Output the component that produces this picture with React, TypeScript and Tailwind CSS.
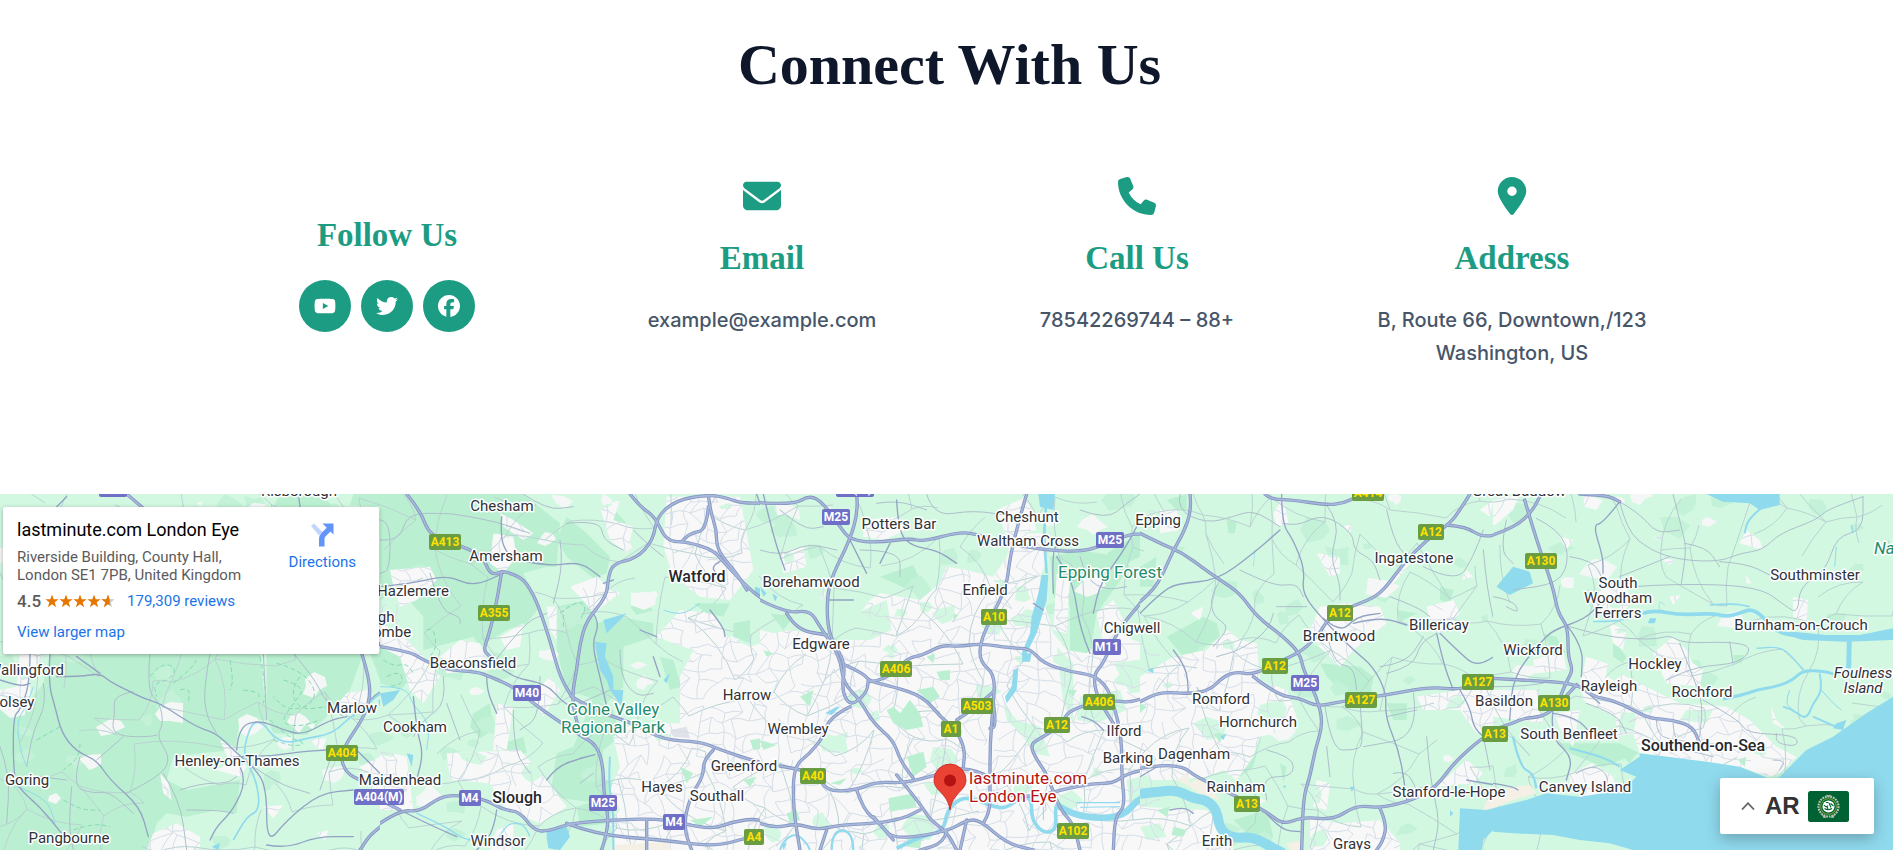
import { FaYoutube, FaTwitter, FaFacebook, FaEnvelope, FaPhone, FaLocationDot } from "react-icons/fa6";
import type { ReactNode } from "react";

type Tile = {
  x: number;
  width: number;
  light?: string[];
  woods: string[];
  urban: string[];
  parks?: string[];
  sand?: string[];
  water: string[];
  rivers: [string, number][];
  major: string[];
  medium: string[];
  thin: string[];
  paths?: string[];
};

/* Every tile is drawn in a grid of three units per map pixel. */
const tiles: Tile[] = [
  {
    x: 0,
    width: 380,
    woods: [
      "0,660 60,670 130,580 150,490 780,490 800,690 720,690 705,780 600,790 520,800 500,870 560,900 720,870 710,970 650,960 560,980 500,970 470,1000 450,1080 0,1080",
      "1060,12 1200,12 1200,300 1140,300 1140,50 1050,45",
      "800,490 1090,490 1050,600 980,680 920,735 820,730 800,680",
      "1110,490 1200,490 1200,560 1140,570",
      "840,12 960,12 1000,50 820,50",
    ],
    urban: [
      "60,490 130,490 90,570 90,660 0,660 0,600 50,590",
      "660,750 700,770 740,830 720,860 650,840 690,820",
      "1040,610 1100,600 1110,640 1030,680 980,680",
      "440,1080 460,1030 530,1000 600,1040 600,1080",
      "1080,830 1160,790 1200,800 1200,980 1140,950 1110,880",
      "480,850 505,880 515,930 490,910",
      "790,950 850,945 820,985",
      "920,705 945,700 940,720",
      "930,750 980,745 965,785",
      "950,1030 985,1020 975,1050",
      "1120,490 1140,300 1200,350 1200,460",
      "590,38 608,36 602,48",
    ],
    water: ["1135,630 1160,620 1155,640 1138,648", "1170,605 1190,600 1188,620 1172,625", "635,1070 660,1058 655,1080"],
    rivers: [
      ["1200,595 1140,605 1100,650 1050,680 1000,730 920,745 860,760 820,740 790,700 760,695 740,740 730,800 770,870 780,960 740,980 700,1050", 5],
      ["100,590 80,650 50,690 60,780 80,830", 3],
      ["50,890 140,920 165,1000", 3],
    ],
    major: [
      "1085,490 1110,570 1108,640 1080,700 1045,750 1020,800 1040,850 1080,870",
      "1200,970 1120,1020 1080,1080",
      "1135,460 1165,480 1200,480",
      "380,12 430,55",
    ],
    medium: [
      "170,560 240,560 300,550 330,575 380,600 430,625 480,640 540,680 600,715 650,730 710,790 760,830 800,890 800,1065 860,990 960,910 1060,900",
      "150,490 145,580 165,650 185,730 230,785 290,810 330,870 420,950 445,1040",
      "90,490 90,580 60,660 40,680 40,830 50,890 120,950 185,1030",
      "710,780 715,710 780,690 850,720 910,735 990,690 1040,680",
      "720,830 740,870 700,960 650,1010 630,1050",
      "700,800 800,800 900,785 980,780",
      "1070,780 1110,820 1160,870",
      "1110,630 1140,600 1200,590",
      "895,12 900,50",
      "170,50 200,20",
      "230,500 300,550",
      "800,1065 860,1075 950,1040 1060,1040",
      "0,570 60,590 90,580",
    ],
    thin: [
      "450,490 440,600 480,640 490,700 470,740 510,800 490,850 380,910",
      "630,490 610,600 620,680 650,730",
      "400,605 340,615 345,670 335,720 370,740 450,740 470,735",
      "370,740 290,810",
      "790,490 800,690",
      "240,800 215,890 280,910 330,905 400,970",
      "215,890 205,1000 220,1080",
      "130,580 140,640 100,720 80,830",
      "0,770 30,850 20,1000",
      "490,850 540,930 560,1080",
      "540,900 600,880 680,880 710,860",
      "880,490 940,560 980,640 1030,680",
      "120,860 200,870",
      "760,830 830,880 930,910",
      "560,960 650,960 700,970",
      "1000,780 960,900",
      "1140,90 1170,100 1170,240 1140,260",
    ],
    paths: [
      "450,560 480,520 530,530 510,570 460,580 470,620",
      "520,580 570,540 590,510",
      "540,600 570,590 565,640",
      "690,510 700,570 690,600",
      "730,600 780,605 775,630",
      "830,520 900,540 950,600 930,650 860,660 820,620",
      "850,570 920,590 880,640 840,700 900,710 960,690",
      "810,690 860,740 920,760 880,770 820,750",
      "900,560 870,600 900,660 980,650",
      "110,750 180,710",
      "240,760 240,800 190,840",
      "190,930 240,960 300,960",
      "220,1020 280,1000 330,1010",
      "780,500 800,600 790,640",
    ],
  },
  {
    x: 380,
    width: 380,
    woods: [
      "0,12 430,12 540,100 530,230 500,230 430,250 480,350 440,400 380,420 300,470 280,440 130,480 130,380 60,300 0,330",
      "530,150 560,80 620,130 690,200 680,250 640,265 560,200",
      "530,350 620,330 650,400 720,380 820,400 820,440 730,470 730,590 680,640 560,600 530,480",
      "640,620 700,660 720,740 670,780 660,940 510,920 530,790 580,770",
      "0,470 90,500 100,560 60,600 0,580",
      "840,500 880,510 905,590 870,600",
      "280,670 330,640 340,720 300,745 270,710",
      "750,350 800,340 820,360 770,375",
      "370,760 430,740 440,790 380,800",
      "640,850 700,880 690,1000 600,1010 590,950 650,930",
      "690,45 740,100 690,110",
    ],
    urban: [
      "30,240 150,230 170,270 110,330 60,350 40,290",
      "0,400 60,430 130,500 180,560 130,640 90,600 60,500 0,470",
      "340,130 400,140 410,200 370,250 330,220",
      "360,70 400,90 460,130 430,150 370,110",
      "180,500 240,450 300,460 330,540 200,550",
      "570,290 650,260 720,310 640,370 600,320",
      "860,20 1080,20 1120,240 1050,330 960,320 880,260 850,170",
      "500,350 530,350 530,450 510,420",
      "450,620 510,560 540,600 490,680",
      "360,440 430,400 420,470 380,480",
      "200,790 420,780 500,870 560,950 480,1000 380,960 330,880 210,870",
      "0,780 80,800 100,960 0,960",
      "350,640 400,650 380,780 340,780",
      "700,740 760,700 900,700 900,560 940,480 880,460 830,440 900,360 1000,370 1040,440 1110,470 1200,440 1200,1080 710,1080 690,1000 720,960 690,900 720,830",
      "660,50 720,30 700,90 760,110 740,190 690,150",
      "350,1020 400,1000 400,1080 330,1080",
    ],
    parks: [
      "1110,750 1180,740 1190,770 1120,780",
      "900,830 940,850 920,880",
      "930,990 1000,980 960,1010",
      "1130,620 1160,610 1150,660",
      "1060,400 1110,390 1110,460 1060,440",
      "940,340 1050,340 1030,380 980,370",
      "1090,870 1130,860 1110,890",
    ],
    sand: ["700,1065 870,1055 870,1080 690,1080"],
    water: [
      "500,1020 560,1010 570,1040 540,1080 505,1075 500,1045",
      "645,455 680,460 675,500 700,560 700,600 730,600 725,650 690,600 680,570 660,540 650,490",
      "670,390 740,370 720,390 680,430",
      "0,610 60,600 40,630 10,650",
      "1125,290 1155,300 1150,320 1125,315",
      "80,790 100,795 95,830",
      "850,570 870,550 860,580",
    ],
    rivers: [
      ["0,590 80,590 95,640 150,700 140,780", 3],
      ["110,970 200,1010 250,1050 350,1060 380,1000 430,1000 450,1040", 4],
      ["690,800 685,880 700,960 700,1080", 6],
      ["850,360 900,380 960,340", 3],
    ],
    major: [
      "0,470 90,485 130,510 200,540 290,545 330,560 400,590 460,640 530,690 600,735 650,765 670,830 670,900 685,980 680,1030 665,1080",
      "1200,35 1100,45 1030,20 980,15 890,30 830,80 820,150 770,205 700,220 685,260 680,320 620,390 600,460 590,540 575,620 590,700 610,740",
      "370,245 420,255 460,310 490,390 515,470 540,560 575,620",
      "80,12 120,60 150,140 250,170 310,200 330,255 370,245",
      "365,245 350,340 325,440 310,480 330,500",
      "575,620 640,660 760,700 850,750 960,755 1010,775 1110,810 1200,830",
      "1000,780 970,810 970,860 930,920 910,1010 935,1080",
      "0,1000 60,960 120,965 180,920 240,915 320,930 370,960 420,965 460,1020 500,1025 570,1000 700,990 850,985 990,1020 1060,995 1130,985 1190,1010",
      "560,1000 650,1035 850,1050 1000,1070 1100,1045 1200,1010",
      "800,990 800,1080",
      "750,12 780,50 825,80 860,155 920,155 1000,180 1030,215 1100,290 1150,330 1200,360",
      "985,15 990,60 1010,120 1010,180 1070,250 1100,300",
      "985,50 980,120 930,130 905,155",
      "0,930 60,960",
    ],
    medium: [
      "640,370 660,400 635,460 660,560 680,650",
      "1130,12 1200,220",
      "420,210 500,230 600,215 660,260",
      "330,500 380,560 500,580 550,640 600,660",
      "320,560 320,600 350,670",
      "500,870 530,830 600,805 660,790 600,805",
      "350,960 340,1030 290,1080",
      "60,960 140,1000 230,1040",
      "990,360 1030,410 1035,440",
      "0,290 100,280 200,255 280,290 370,250",
      "365,80 360,150 390,200",
      "100,620 110,720 130,790 110,870",
      "820,500 840,560",
      "1020,215 990,230 1020,260",
      "780,420 830,440",
      "670,280 700,270",
    ],
    thin: [
      "0,90 30,90 30,240 0,250",
      "0,150 60,155 80,70 200,70 240,75 350,95 450,130",
      "150,250 180,360 240,380 240,400",
      "540,150 550,220 520,340",
      "720,480 720,560 770,620 820,610",
      "560,100 660,90 670,150 730,180",
      "190,560 200,640 130,690 100,740",
      "200,640 240,750",
      "400,660 400,780 450,850",
      "480,560 480,680 420,720",
      "600,640 690,600",
      "600,880 640,850",
      "340,520 430,400 500,370",
      "760,120 800,160 850,200",
      "430,12 500,60 580,50",
    ],
    paths: [
      "10,510 40,530 80,520 100,550",
      "20,560 60,540 70,580 30,590",
      "140,420 160,410 170,470 150,500",
      "540,370 590,330 620,350 600,390",
      "550,410 550,360",
    ],
  },
  {
    x: 760,
    width: 380,
    woods: [
      "870,200 960,180 1080,200 1110,230 1010,370 990,490 930,500 930,350 880,320",
      "360,260 460,225 490,290 460,305",
      "1040,190 1140,130 1140,200 1080,230",
    ],
    urban: [
      "0,420 40,430 90,420 150,430 240,450 330,450 350,390 300,370 330,330 360,310 420,320 480,330 540,280 560,230 620,240 700,260 740,200 760,130 860,130 860,210 840,260 850,330 880,430 920,480 980,490 1060,420 1120,450 1200,480 1200,1080 0,1080",
      "890,250 930,270 920,430 880,420",
      "1010,370 1060,330 1090,390 1030,460",
      "310,90 410,80 440,120 370,150 310,140",
      "60,190 130,170 140,230 70,250",
      "710,60 800,20 830,120 740,140",
      "170,280 200,300 190,330 150,310",
      "1140,60 1200,60 1200,120 1150,110",
    ],
    light: [
      "240,390 380,330 395,420 330,450 260,440",
      "730,640 770,690 840,710 870,800 820,790 790,740 740,690",
      "1100,870 1180,850 1200,900 1110,960",
      "960,620 1080,600 1100,660 1010,700 950,690",
      "1060,520 1200,500 1200,600 1110,610",
      "890,470 940,520 940,700 910,640",
      "700,270 740,270 720,300",
    ],
    parks: [
      "380,660 400,650 420,670 450,630 480,670 490,710 440,720 400,700",
      "385,925 460,910 470,950 390,965",
      "440,800 490,785 500,830 460,860",
      "80,970 110,960 120,990 90,1000",
      "470,600 520,590 540,620 510,640",
      "530,545 570,540 570,570 540,570",
      "500,500 525,490 520,520",
      "220,440 250,450 240,480",
      "120,620 160,600 150,650",
      "0,750 50,765 10,780",
      "210,880 260,865 240,885",
      "580,370 595,375 580,395",
      "920,600 950,600 940,620",
      "440,1040 490,1030 480,1075 440,1070",
      "10,480 40,490 20,500",
      "30,370 100,380 70,420",
      "1170,520 1200,510 1200,570",
    ],
    water: [
      "845,255 865,255 860,330 830,430 800,490 790,510 785,490 810,430 815,380 835,310",
      "760,540 775,535 770,600 740,640 735,620 755,590",
      "835,12 885,12 880,60 840,50",
      "195,670 230,650 240,650 215,675",
      "0,290 20,310 10,320",
      "37,310 52,320 45,335",
      "790,490 815,490 810,515 785,515",
      "65,1060 80,1060 70,1080",
    ],
    rivers: [
      ["858,50 850,120 860,250", 8],
      ["410,1075 480,1040 550,1025 562,960 600,925 640,925 700,950 740,955 790,915 815,930 815,990 850,1030 890,1020 885,950 900,940", 11],
      ["890,945 930,970 1000,985 1090,980 1140,920 1200,915", 20],
      ["60,1080 70,1050 110,1030 140,1060 150,1080", 6],
      ["215,1080 215,1040 245,1015 275,1035 280,1080", 7],
      ["950,938 1080,938", 4],
      ["960,952 1080,950", 3],
      ["850,990 850,950", 3],
    ],
    major: [
      "0,38 100,45 150,15 190,40 240,110 270,150 350,158 450,145 490,155 600,125 660,135 740,160 850,180 960,185 1020,170 1100,135 1150,130 1200,160",
      "290,12 295,60 270,150 215,260 200,330 205,430 240,490 255,530 245,600 270,650 320,610 325,570",
      "0,330 80,370 150,360 180,410 240,500 250,580 300,630 340,700 400,750 420,810 460,865",
      "80,370 110,420 200,435",
      "270,650 210,680 190,740 150,790 100,830 100,960 120,1080",
      "330,575 380,570 440,505 490,495 545,465 600,470 660,460 760,475 810,475 850,520 930,545 1000,555 1040,590 1060,640 1085,740 1085,860 1095,950 1065,980 1060,1080",
      "255,525 310,550 330,575 400,590 490,620 540,680 590,720 615,780 610,830",
      "800,12 780,80 750,200 740,290 690,390 660,460 660,515 705,555 700,640 690,760 690,880 690,960 670,1000",
      "1200,260 1150,330 1090,400 1060,450 1030,520 1000,555 1010,620 1060,700",
      "1200,605 1120,640 1060,630 930,655 900,710 840,745 810,765 830,810 860,850 900,960 940,1000 960,1080",
      "700,605 650,650 590,690",
      "60,828 100,835 170,850 200,905 290,900 350,875 430,880 530,855 610,830 690,860",
      "290,900 310,960 360,1000 400,1050 560,1025 620,990 660,990 740,1060 820,1080",
      "0,1000 40,1015 110,1000 170,1020 240,1005 350,1000 430,985 480,960",
      "410,855 480,940 510,990 560,1025 590,1080",
      "200,1020 180,1080",
      "700,910 820,925 900,900 1000,880 1060,880 1100,850 1200,830",
      "700,640 710,710 690,715",
      "560,1025 550,1060 480,1080",
      "620,990 600,1080",
      "340,980 400,1050",
    ],
    medium: [
      "10,12 40,140 75,240",
      "410,30 415,130 460,170 530,180 590,220",
      "270,150 320,250",
      "390,160 360,220",
      "990,490 960,420 940,280 890,200",
      "965,680 1000,690 1030,720",
      "880,310 875,180 900,160",
      "1130,110 1100,170 1020,280 1000,370",
      "820,340 850,360",
      "200,330 280,330",
    ],
    thin: [
      "60,60 130,120 190,110",
      "500,12 520,80 640,60 760,80",
      "300,180 420,180 420,260",
      "960,60 1040,90 1100,40 1140,12",
      "960,200 980,270 1040,300 1100,290",
      "0,180 60,200 140,160 230,180",
      "350,40 410,30 500,60",
    ],
  },
  {
    x: 1140,
    width: 353,
    woods: [
      "80,440 190,380 230,400 240,440 180,480 130,500",
      "540,520 660,530 700,560 690,620 600,600 560,560",
      "300,780 370,720 340,830 300,860",
      "740,640 800,640 800,690 760,690",
      "280,990 380,960 400,1040 360,1070",
      "900,290 940,300 930,340 900,330",
      "80,30 140,12 140,60 110,60",
      "610,530 650,530 700,580 660,620",
      "260,90 290,95 285,130 265,130",
      "770,360 830,370 780,395",
      "0,230 50,200 40,290 0,290",
      "420,820 440,830 430,880",
      "180,700 270,690 280,740 210,790",
    ],
    urban: [
      "0,560 100,500 200,480 260,420 300,450 350,460 360,570 440,600 470,680 400,730 360,740 340,800 290,870 250,840 200,860 100,870 0,870",
      "0,950 200,960 250,1010 280,1080 0,1080",
      "540,350 620,340 720,350 740,400 690,440 640,480 600,530 560,490 500,440",
      "860,350 940,330 960,370 900,430 870,400",
      "830,620 960,600 1200,590 1200,680 1110,700 1010,730 960,660 850,660",
      "910,870 980,810 1030,850 1000,880 890,890",
      "510,985 600,1000 720,990 780,1060 780,1080 510,1080",
      "530,870 570,880 560,960 520,950",
      "530,190 600,200 600,250 570,260",
      "400,70 430,20 445,100 410,110",
      "60,60 110,60 120,120 60,130",
      "150,370 190,350 180,390",
      "820,210 770,240 730,300 770,270",
      "610,110 635,100 630,130",
      "980,240 1000,260 965,270",
      "1020,60 1060,30 1050,80",
    ],
    light: ["160,700 200,680 260,700 250,740 200,750", "0,1010 60,1000 80,1040 20,1050"],
    parks: ["0,640 20,650 0,670", "100,1010 140,1020 130,1040 95,1035", "220,730 250,730 240,760", "50,960 90,950 80,980"],
    sand: ["1040,930 1150,890 1200,880 1200,930 1030,960", "110,870 140,850 150,880 180,860 240,930 190,920 150,890", "440,1060 490,1050 490,1080 450,1080"],
    water: [
      "960,955 1040,960 1120,940 1200,925 1200,1030 1060,1020 1030,1050 1025,1080 955,1080",
      "1110,230 1170,250 1180,280 1140,310 1110,300 1090,325 1070,290 1100,275",
      "630,890 645,890 635,905",
      "20,540 40,535 40,550",
      "930,960 940,970 930,980",
      "430,885 440,890 432,895",
      "240,740 260,730 250,750",
    ],
    rivers: [
      ["0,912 60,905 110,900 160,925 200,930 230,960 240,1020 280,1045 340,1040 400,1075 430,1090", 30],
      ["1110,740 1130,780 1140,830 1180,870 1190,900", 5],
      ["340,230 345,180", 2],
    ],
    major: [
      "0,130 60,160 130,190 190,235 240,270 300,310 350,380 430,440 480,490 490,540 530,620 550,700 525,780 510,860 490,920 485,1080",
      "150,12 155,60 130,130 100,180 70,250 40,300 0,335",
      "375,12 390,28 460,30 560,45 610,40 650,20",
      "990,12 960,60 930,100 860,150 790,220 740,290 700,325 630,350 560,390 540,430 490,480 440,505 340,555 290,545 250,560 210,600 150,612 60,605 0,635",
      "920,105 980,110 1030,145 1120,120 1200,60",
      "1155,20 1200,200",
      "340,560 410,615 480,625 530,650 600,635 740,615 870,590 960,600 1060,570 1130,560 1200,570",
      "0,835 60,825 130,830 160,855 200,875 290,920 380,965 430,1005 490,980 580,990 650,945 720,955 820,930 890,890 940,820 1030,740 1100,705 1150,685 1200,685",
      "720,955 740,1000 730,1050 710,1080",
    ],
    medium: [
      "425,12 425,100 460,150 495,240 485,310 550,390 640,480 700,530 740,610 735,680 780,790 800,930",
      "0,370 60,310 110,280 230,272 340,190 420,120",
      "640,400 720,380 800,405",
      "890,430 910,520 940,600",
      "900,430 960,490 1010,530 1080,490",
      "100,480 140,530 145,610",
      "960,600 990,650 1000,710 1030,740",
      "1115,560 1115,680 1150,685",
      "980,870 1060,885 1130,890",
      "550,385 600,430 650,380 720,370",
      "370,960 420,1020 480,1025",
      "90,960 130,950 160,970",
      "0,860 60,825",
    ],
    thin: [
      "120,12 110,60 200,100 280,80 340,60 420,110",
      "240,270 210,320 220,380 270,410 220,470",
      "430,100 470,110 550,70 640,130 640,180 700,210 720,270",
      "850,230 950,280 1000,200 1030,120",
      "750,320 830,350 870,380",
      "555,650 575,780 640,780 670,770 660,640",
      "820,610 840,740 670,770",
      "860,740 870,870 900,990 880,1080",
      "400,370 390,420 300,480 230,500",
      "300,240 400,290 470,280 490,320",
      "560,45 600,100 570,200 600,280 600,330",
      "740,60 760,150 800,200",
      "410,350 500,350",
      "740,550 820,530 840,460 890,430",
      "740,680 830,660",
      "1030,180 1040,300 1080,470",
      "380,780 460,800 460,860 370,860 380,930",
      "560,770 570,860",
      "720,530 800,520 850,440",
      "1030,740 1050,840",
      "760,850 800,840 830,900",
      "560,430 580,520 640,530 650,600",
    ],
  },
  {
    x: 1493,
    width: 400,
    woods: [
      "200,760 380,760 440,790 330,830 230,790",
      "360,450 400,500 390,520 360,500",
      "720,495 755,495 745,520 725,520",
      "150,430 190,440 220,490 170,470",
      "370,780 430,790 410,820",
    ],
    urban: [
      "280,500 340,520 400,560 560,640 700,650 770,690 850,770 910,800 860,850 830,860 740,830 640,815 440,790 420,730 370,740 370,680 280,640 260,590",
      "480,490 540,440 580,480 600,520 630,540 620,590 520,580",
      "230,850 300,820 360,860 370,900 280,920 230,890",
      "0,600 130,600 150,700 0,680",
      "190,670 260,660 240,770 190,700",
      "320,300 400,290 420,340 360,380 300,350",
      "350,400 400,420 390,480 360,460",
      "900,320 945,330 940,400 900,380",
      "760,120 800,150 810,180 740,160",
      "120,510 210,480 220,540 130,550",
      "500,205 545,210 530,225",
      "530,320 565,315 540,345",
      "480,140 515,140 500,155",
      "835,650 850,690 880,720 840,700",
      "200,140 240,150 220,180",
      "270,12 330,30 310,60 275,50",
      "0,30 80,15 60,60 0,110",
      "760,255 775,280 760,280",
      "820,75 840,70 830,90",
    ],
    light: ["580,660 660,660 640,700 560,690"],
    parks: ["735,810 760,800 755,830"],
    sand: ["0,900 110,885 130,910 60,930 0,955", "80,820 100,825 95,840"],
    water: [
      "1200,620 1120,670 1020,740 940,780 860,860 840,870 740,830 640,815 440,790 440,800 380,840 430,860 400,890 330,910 260,920 160,910 100,930 0,955 0,1025 60,1030 180,1035 260,1050 350,1060 420,1080 1200,1080",
      "900,425 1000,435 1100,435 1200,415 1200,450 1060,455 930,450 860,430",
      "640,12 860,12 860,45 800,60 770,40 690,35",
      "60,230 110,245 120,280 80,300 50,315 10,290",
      "470,385 490,385 485,400 465,400",
      "1020,715 1030,700 1060,690 1050,720",
    ],
    rivers: [
      ["450,370 480,360 560,375 660,370 700,380 740,370 780,355 830,400 860,430 940,440", 11],
      ["650,345 720,340 770,350", 5],
      ["300,395 380,395 450,370", 4],
      ["1069,445 1067,535", 15],
      ["690,627 750,615 790,600 850,590 900,570 930,540 1000,545 1030,555", 9],
      ["930,540 900,500 860,470 790,475", 4],
      ["980,550 990,600 960,640 940,690 900,660 870,650", 6],
      ["890,600 875,640 900,660", 3],
      ["985,600 1020,640 1045,660", 3],
      ["960,680 1040,715", 6],
      ["810,50 765,85 755,130", 6],
      ["500,365 495,330 515,345", 2],
      ["230,775 330,800 380,830", 6],
      ["60,740 80,830 120,850 130,895", 7],
      ["1030,170 1025,230", 3],
      ["1075,105 1080,130", 4],
    ],
    major: [
      "95,30 130,150 180,290 195,370 225,410 225,500 240,540 220,575 190,650",
      "0,135 70,110 120,60 140,20",
      "0,565 90,570 250,580 300,620 360,630 420,660 470,685 540,690 600,710 620,760",
      "0,720 60,700 90,685 150,680 190,650 250,585",
      "260,12 340,15 380,35",
    ],
    medium: [
      "380,35 330,100 300,105 330,200 330,250",
      "225,405 180,420 140,460 60,560 50,690",
      "225,405 280,385 320,340",
      "225,410 270,470 265,560",
      "180,660 170,740 240,800 220,870",
      "0,880 60,890 75,900",
      "250,580 320,640",
      "180,670 250,680 300,740",
    ],
    thin: [
      "380,35 400,120 470,180 560,210 680,215 740,190 810,180 860,130 970,90 1000,60 1110,20",
      "540,12 570,130 580,180 565,280",
      "420,290 560,280 800,290 880,350 915,370 920,290 1000,240 1030,140 1110,120 1110,20",
      "380,35 440,70 490,130 560,120",
      "130,85 200,120 230,200 200,280 60,300",
      "230,410 330,440 480,450 530,435 570,460 710,455 780,470 740,520 610,530 520,570",
      "560,460 600,560 630,640 620,740",
      "575,160 640,170 680,230",
      "680,215 760,220 830,255",
      "630,630 740,690 760,730 910,735 915,770 850,760 850,730",
      "380,260 480,220 530,200",
      "490,690 490,740 560,750 700,780",
      "540,700 540,770 660,800",
      "230,200 300,210 330,270",
      "0,590 70,590 150,580",
      "710,455 720,520",
      "250,850 300,820 350,860 330,900",
      "280,640 370,670 400,730",
      "840,810 880,810 860,840",
      "40,90 20,180 60,220",
      "0,320 60,330 80,370 40,350",
    ],
  },
];

const smooth = (line: string) => {
  const p = line.split(" ").map((pair) => pair.split(",").map(Number));
  let d = `M${p[0][0]} ${p[0][1]}`;
  for (let i = 1; i < p.length - 1; i++) {
    const mx = (p[i][0] + p[i + 1][0]) / 2;
    const my = (p[i][1] + p[i + 1][1]) / 2;
    d += `Q${p[i][0]} ${p[i][1]} ${mx} ${my}`;
  }
  const last = p[p.length - 1];
  return `${d}L${last[0]} ${last[1]}`;
};

/* Irregular street mesh: a jittered lattice with some of its links dropped. */
const mesh = (step: number, keep: number, start: number) => {
  let seed = start;
  const random = () => {
    seed = (seed * 16807) % 2147483647;
    return seed / 2147483647;
  };
  const cols = Math.ceil(1893 / step) + 2;
  const rows = Math.ceil(356 / step) + 2;
  const nodes = Array.from({ length: rows }, (_, r) =>
    Array.from({ length: cols }, (_, c) => [
      Math.round((c - 0.5 + (random() - 0.5) * 0.9 + (r % 2) * 0.4) * step),
      Math.round(494 + (r - 0.5 + (random() - 0.5) * 0.9) * step),
    ]),
  );
  const link = (a: number[], b: number[]) => {
    const bend = (random() - 0.5) * 0.4;
    const mx = Math.round((a[0] + b[0]) / 2 + (b[1] - a[1]) * bend);
    const my = Math.round((a[1] + b[1]) / 2 - (b[0] - a[0]) * bend);
    return `M${a[0]} ${a[1]}Q${mx} ${my} ${b[0]} ${b[1]}`;
  };
  let d = "";
  for (let r = 0; r < rows; r++)
    for (let c = 0; c < cols; c++) {
      if (c + 1 < cols && random() < keep) d += link(nodes[r][c], nodes[r][c + 1]);
      if (r + 1 < rows && random() < keep) d += link(nodes[r][c], nodes[r + 1][c]);
    }
  return d;
};

const streets = mesh(13, 0.72, 77);
const lanes = mesh(38, 0.55, 4242);

/* Small patches of woodland and open ground. */
const specks = (count: number, start: number) => {
  let seed = start;
  const random = () => {
    seed = (seed * 16807) % 2147483647;
    return seed / 2147483647;
  };
  return Array.from({ length: count }, () => {
    const x = random() * 1893;
    const y = 494 + random() * 356;
    const corners = 5 + Math.floor(random() * 4);
    const size = 4 + random() * 9;
    return Array.from({ length: corners }, (_, i) => {
      const a = (i / corners) * Math.PI * 2;
      const k = size * (0.45 + random() * 0.8);
      return `${Math.round(x + Math.cos(a) * k * 1.3)},${Math.round(y + Math.sin(a) * k)}`;
    }).join(" ");
  });
};

const copses = specks(150, 991);
const clearings = specks(60, 313);
const greens = specks(200, 5005);

const towns: [string, number, number][] = [
  ["Risborough", 299, 491],
  ["Chesham", 502, 506],
  ["Amersham", 506, 556],
  ["Hazlemere", 413, 591],
  ["High", 379, 617],
  ["Wycombe", 378, 632],
  ["Beaconsfield", 473, 663],
  ["Cookham", 415, 727],
  ["Marlow", 352, 708],
  ["Henley-on-Thames", 237, 761],
  ["Goring", 27, 780],
  ["Pangbourne", 69, 838],
  ["Wallingford", 26, 670],
  ["Cholsey", 8, 702],
  ["Maidenhead", 400, 780],
  ["Windsor", 498, 841],
  ["Hayes", 662, 787],
  ["Southall", 717, 796],
  ["Greenford", 744, 766],
  ["Harrow", 747, 695],
  ["Borehamwood", 811, 582],
  ["Potters Bar", 899, 524],
  ["Cheshunt", 1027, 517],
  ["Waltham Cross", 1028, 541],
  ["Epping", 1158, 520],
  ["Enfield", 985, 590],
  ["Edgware", 821, 644],
  ["Wembley", 798, 729],
  ["Chigwell", 1132, 628],
  ["Ilford", 1124, 731],
  ["Barking", 1128, 758],
  ["Romford", 1221, 699],
  ["Hornchurch", 1258, 722],
  ["Dagenham", 1194, 754],
  ["Rainham", 1236, 787],
  ["Erith", 1217, 841],
  ["Grays", 1352, 844],
  ["Stanford-le-Hope", 1449, 792],
  ["Brentwood", 1339, 636],
  ["Ingatestone", 1414, 558],
  ["Billericay", 1439, 625],
  ["Wickford", 1533, 650],
  ["Basildon", 1504, 701],
  ["South Benfleet", 1569, 734],
  ["Rayleigh", 1609, 686],
  ["Hockley", 1655, 664],
  ["Rochford", 1702, 692],
  ["South", 1618, 583],
  ["Woodham", 1618, 598],
  ["Ferrers", 1618, 613],
  ["Southminster", 1815, 575],
  ["Burnham-on-Crouch", 1801, 625],
  ["Canvey Island", 1585, 787],
  ["Great Baddow", 1519, 491],
];

const cities: [string, number, number][] = [
  ["Watford", 697, 576],
  ["Slough", 517, 797],
  ["Southend-on-Sea", 1703, 745],
];

const shields: [string, number, number, number][] = [
  ["M40", 113, 489, 28],
  ["A413", 445, 542, 32],
  ["A355", 494, 613, 32],
  ["M40", 527, 693, 28],
  ["A404", 342, 753, 32],
  ["A404(M)", 379, 797, 50],
  ["M4", 470, 798, 22],
  ["M25", 603, 803, 28],
  ["M4", 674, 822, 22],
  ["A4", 754, 837, 20],
  ["A1(M)", 855, 489, 38],
  ["M25", 836, 517, 28],
  ["M25", 1110, 540, 28],
  ["A10", 994, 617, 26],
  ["A406", 896, 669, 32],
  ["A503", 977, 706, 32],
  ["A1", 951, 729, 20],
  ["A12", 1057, 725, 26],
  ["A406", 1099, 702, 32],
  ["M11", 1107, 647, 28],
  ["A40", 813, 776, 26],
  ["A102", 1073, 831, 32],
  ["A414", 1368, 493, 32],
  ["A12", 1431, 532, 26],
  ["A12", 1340, 613, 26],
  ["A12", 1275, 666, 26],
  ["M25", 1305, 683, 28],
  ["A127", 1361, 700, 32],
  ["A127", 1478, 682, 32],
  ["A13", 1495, 734, 26],
  ["A13", 1247, 804, 26],
  ["A130", 1541, 561, 32],
  ["A130", 1554, 703, 32],
];

function Layer({ draw }: { draw: (tile: Tile) => ReactNode }) {
  return (
    <>
      {tiles.map((tile) => (
        <svg
          key={tile.x}
          x={tile.x}
          y={490}
          width={tile.width}
          height={360}
          viewBox={`0 0 ${tile.width * 3} 1080`}
        >
          {draw(tile)}
        </svg>
      ))}
    </>
  );
}

const polygons = (shapes: string[] | undefined, fill: string) =>
  (shapes ?? []).map((points) => <polygon key={points} points={points} fill={fill} />);

const lines = (paths: string[] | undefined, stroke: string, width: number, dash?: string) =>
  (paths ?? []).map((line) => (
    <path
      key={line}
      d={smooth(line)}
      fill="none"
      stroke={stroke}
      strokeWidth={width}
      strokeDasharray={dash}
      strokeLinecap={dash ? "butt" : "round"}
      strokeLinejoin="round"
    />
  ));

function LondonMap() {
  return (
    <svg
      className="block h-[356px] w-full"
      viewBox="0 494 1893 356"
      preserveAspectRatio="xMidYMid slice"
      role="img"
      aria-label="Map of London"
    >
      <defs>
        <clipPath id="built-up">
          {tiles.flatMap((tile) =>
            tile.urban.map((points) => (
              <polygon key={`${tile.x} ${points}`} points={points} transform={`translate(${tile.x} 490) scale(0.3333)`} />
            )),
          )}
        </clipPath>
      </defs>
      <rect x="-1000" y="0" width="4000" height="2000" fill="#d3f8e2" />
      <Layer draw={(t) => polygons(t.woods, "#baf0d1")} />
      {copses.map((points) => (
        <polygon key={points} points={points} fill="#c4f2d8" />
      ))}
      {clearings.map((points) => (
        <polygon key={points} points={points} fill="#f5f7f6" />
      ))}
      <Layer draw={(t) => polygons(t.urban, "#f8f8f8")} />
      <Layer
        draw={(t) => (
          <>
            {polygons(t.light, "#d3f8e2")}
            {t.x === 380 && <polygon points="870,720 920,710 930,745 880,740" fill="#dfe3e9" />}
          </>
        )}
      />
      <g clipPath="url(#built-up)">
        {greens.map((points) => (
          <polygon key={points} points={points} fill="#d3f8e2" />
        ))}
      </g>
      <path d={lanes} fill="none" stroke="#b9d3d2" strokeWidth="1" />
      <g clipPath="url(#built-up)">
        <path d={streets} fill="none" stroke="#d5dee8" strokeWidth="1" />
      </g>
      <Layer
        draw={(t) => (
          <>
            {polygons(t.parks, "#baf0d1")}
            {polygons(t.sand, "#f5f0e5")}
            {lines(t.paths, "#86d8b4", 3, "14 8")}
            {polygons(t.water, "#90daee")}
            {t.rivers.map(([line, width]) => (
              <path key={line} d={smooth(line)} fill="none" stroke="#90daee" strokeWidth={width} strokeLinejoin="round" />
            ))}
            {lines(t.thin, "#aebfcc", 3)}
            {lines(t.medium, "#93a3c4", 4)}
            {lines(t.major, "#8495c0", 10)}
            {lines(t.major, "#a8b8dc", 5)}
          </>
        )}
      />
      <g
        fontFamily="Roboto, 'Liberation Sans', sans-serif"
        textAnchor="middle"
        stroke="#ffffff"
        strokeWidth="3"
        strokeLinejoin="round"
        paintOrder="stroke"
      >
        <g fontSize="15" fill="#2f3237">
          {towns.map(([name, x, y]) => (
            <text key={name} x={x} y={y + 5}>
              {name}
            </text>
          ))}
          <g fontStyle="italic">
            <text x="1863" y="678">Foulness</text>
            <text x="1863" y="693">Island</text>
          </g>
        </g>
        <g fontSize="16" fontWeight="500" fill="#26282c">
          {cities.map(([name, x, y]) => (
            <text key={name} x={x} y={y + 6}>
              {name}
            </text>
          ))}
        </g>
        <g fontSize="17" fill="#1f8c6a">
          <text x="613" y="715">Colne Valley</text>
          <text x="613" y="733">Regional Park</text>
          <text x="1110" y="578">Epping Forest</text>
          <text x="1874" y="554" textAnchor="start" fontStyle="italic">Na</text>
        </g>
        <g fontSize="17" fill="#b31412" textAnchor="start">
          <text x="969" y="784">lastminute.com</text>
          <text x="969" y="802">London Eye</text>
        </g>
      </g>
      <g fontFamily="Roboto, 'Liberation Sans', sans-serif" fontSize="12" fontWeight="700" textAnchor="middle">
        {shields.map(([name, x, y, width]) => {
          const motorway = name.includes("M");
          return (
            <g key={`${name} ${x}`}>
              <rect x={x - width / 2} y={y - 8} width={width} height="16" rx="2" fill={motorway ? "#6f6fc7" : "#6a9c42"} />
              <text x={x} y={y + 4} fill={motorway ? "#ffffff" : "#ffe100"}>
                {name}
              </text>
            </g>
          );
        })}
      </g>
      <path
        d="M950 810C948.500 801 945 797 940.500 792C936.500 788 934 785 934 780A16 16 0 0 1 966 780C966 785 963.500 788 959.500 792C955 797 951.500 801 950 810Z"
        fill="#ea4335"
        stroke="#c5221f"
        strokeWidth="0.8"
      />
      <circle cx="950" cy="780.500" r="6" fill="#b31412" />
    </svg>
  );
}

function Star({ half = false }: { half?: boolean }) {
  const star = "M7 0.500L8.700 5.300H13.600L9.700 8.300L11.100 13.200L7 10.200L2.900 13.200L4.300 8.300L0.400 5.300H5.300Z";
  return (
    <svg viewBox="0 0 14 14" className="h-[14px] w-[14px]" aria-hidden="true">
      <path d={star} fill={half ? "#c8c8c8" : "#e77600"} />
      {half && <path d="M7 0.500L8.700 5.300V11.450L7 10.200L2.900 13.200L4.300 8.300L0.400 5.300H5.300Z" fill="#e77600" />}
    </svg>
  );
}

function PlaceCard() {
  return (
    <article className="absolute top-[13px] left-[3px] flex h-[147px] w-[376px] justify-between rounded-[2px] bg-white pt-3 pr-[23px] pl-[14px] font-[Roboto,'Liberation_Sans',sans-serif] text-[15px] leading-[18px] shadow-[0_1px_4px_rgba(0,0,0,0.3)]">
      <div>
        <h2 className="text-[18px] leading-[22px] font-normal text-black">lastminute.com London Eye</h2>
        <p className="mt-[7px] text-[#5b5b5b]">
          Riverside Building, County Hall,
          <br />
          London SE1 7PB, United Kingdom
        </p>
        <div className="mt-[7px] flex items-center leading-[20px]">
          <span className="text-[17px] font-medium text-[#5b5b5b]">4.5</span>
          <span className="ml-1 flex" role="img" aria-label="4.5 out of 5 stars">
            <Star />
            <Star />
            <Star />
            <Star />
            <Star half />
          </span>
          <a href="#reviews" className="ml-3 text-[#1a73e8]">179,309 reviews</a>
        </div>
        <a href="#larger-map" className="mt-3 inline-block text-[#1a73e8]">View larger map</a>
      </div>
      <a href="#directions" className="flex flex-col items-center pt-1 text-[#1a73e8]">
        <svg viewBox="0 0 24 24" className="h-6 w-6" aria-hidden="true">
          <path d="M1 3L4 0.500L12.500 9L9 12.500Z" fill="#c1d5ff" />
          <path d="M12.500 0.500H23.500V11.500L20.500 8.400L15.700 13.200Q14.500 14.500 14.500 16V23.500H9V16Q9 12.500 11.500 10L16.700 4.800Z" fill="#6394fa" />
        </svg>
        <span className="mt-[6px]">Directions</span>
      </a>
    </article>
  );
}

function LanguageButton() {
  return (
    <button
      type="button"
      className="absolute right-[19px] bottom-4 flex h-14 w-[154px] items-center rounded-[2px] bg-white pl-[21px] font-['Liberation_Sans',Arial,sans-serif] text-[24px] font-bold text-[#333] shadow-[0_5px_15px_rgba(0,0,0,0.25)]"
    >
      <svg viewBox="0 0 14 8" className="h-2 w-[14px]" aria-hidden="true">
        <path d="M1 7.500L7 1.200L13 7.500" fill="none" stroke="#666" strokeWidth="1.800" />
      </svg>
      <span className="ml-[10px]">AR</span>
      <svg viewBox="0 0 41 31" className="ml-2 h-[31px] w-[41px]" aria-hidden="true">
        <rect width="41" height="31" rx="2.500" fill="#006233" />
        <circle cx="20.500" cy="15.500" r="10" fill="none" stroke="#b9c4b4" strokeWidth="2.200" strokeDasharray="1.800 0.900" />
        <circle cx="20.500" cy="15.500" r="7.800" fill="#006233" stroke="#8aa832" strokeWidth="1" />
        <circle cx="20.500" cy="15.500" r="6" fill="#fff" />
        <path
          d="M16 14Q18 17 20 14.500M21 12L23 16.500M18 11.500H20.500M22.500 12.500L25.500 15M16.500 17.500Q20 20 24 17.500M19 15.500L20 18"
          fill="none"
          stroke="#006233"
          strokeWidth="1.100"
        />
        <path d="M14.500 24.500L18 26.500M26.500 24.500L23 26.500M16 25.500V27M25 25.500V27M18.500 4L20.500 5.500L22.500 4" fill="none" stroke="#b9c4b4" strokeWidth="1.300" />
      </svg>
    </button>
  );
}

const socials = [
  { name: "YouTube", Icon: FaYoutube },
  { name: "Twitter", Icon: FaTwitter },
  { name: "Facebook", Icon: FaFacebook },
];

const contacts = [
  { title: "Email", Icon: FaEnvelope, lines: ["example@example.com"] },
  { title: "Call Us", Icon: FaPhone, lines: ["78542269744 – 88+"] },
  { title: "Address", Icon: FaLocationDot, lines: ["B, Route 66, Downtown,/123", "Washington, US"] },
];

function ColumnTitle({ children }: { children: ReactNode }) {
  return (
    <h3 className="font-['Liberation_Serif',serif] text-[33px] leading-[40px] font-bold text-[#1c9c83]">
      {children}
    </h3>
  );
}

export default function App() {
  return (
    <main className="bg-white">
      <section className="pt-8 pb-[124px] pl-1.5 text-center">
        <h1 className="font-['Liberation_Serif',serif] text-[58px] leading-[66px] font-bold text-[#0f172a]">
          Connect With Us
        </h1>
        <div className="mx-auto mt-[79px] grid max-w-[1500px] grid-cols-4">
          <div className="flex flex-col items-center self-center">
            <ColumnTitle>Follow Us</ColumnTitle>
            <div className="mt-[25px] flex gap-[10px]">
              {socials.map(({ name, Icon }) => (
                <a
                  key={name}
                  href={`#${name.toLowerCase()}`}
                  aria-label={name}
                  className="flex h-[52px] w-[52px] items-center justify-center rounded-full bg-[#1c9c83] text-white"
                >
                  <Icon size={22} />
                </a>
              ))}
            </div>
          </div>
          {contacts.map(({ title, Icon, lines: rows }) => (
            <div key={title} className="flex flex-col items-center">
              <Icon size={38} className="text-[#1c9c83]" />
              <div className="mt-[23px]">
                <ColumnTitle>{title}</ColumnTitle>
              </div>
              <p className="mt-[26px] font-[Inter,sans-serif] text-[20px] leading-[33px] font-medium text-[#475569]">
                {rows.map((row) => (
                  <span key={row} className="block">
                    {row}
                  </span>
                ))}
              </p>
            </div>
          ))}
        </div>
      </section>
      <section className="relative overflow-hidden">
        <LondonMap />
        <PlaceCard />
        <LanguageButton />
      </section>
    </main>
  );
}
